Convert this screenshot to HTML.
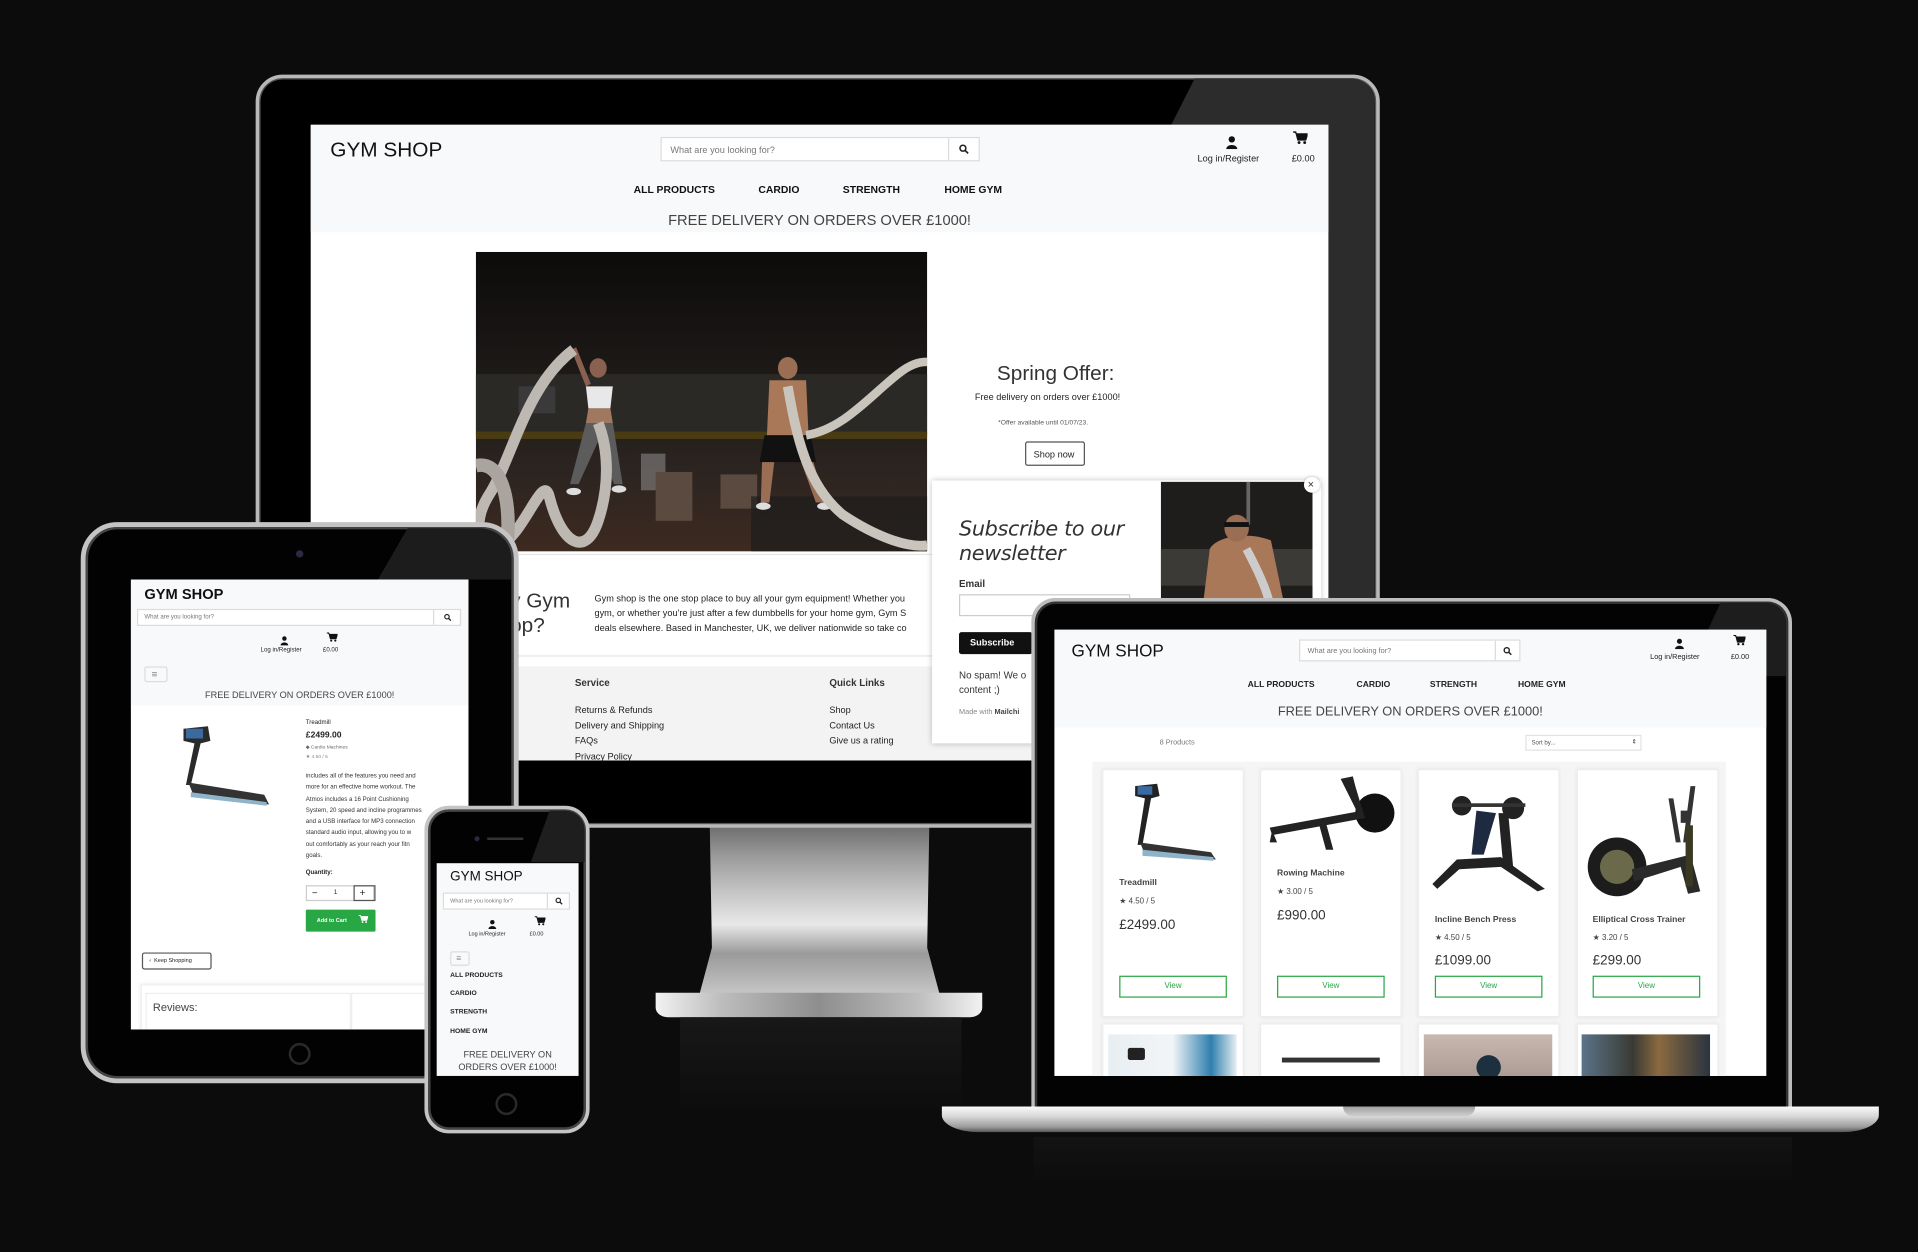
<!DOCTYPE html>
<html><head><meta charset="utf-8">
<style>
*{margin:0;padding:0;box-sizing:border-box}
html,body{width:1918px;height:1252px;overflow:hidden;background:#0b0b0b}
body{font-family:"Liberation Sans",sans-serif;color:#222}
#st{position:absolute;left:0;top:0;width:1568px;height:1024px;transform:scale(1.22321,1.22266);transform-origin:0 0;background:#0c0c0c}
.a{position:absolute}
.t{position:absolute;white-space:nowrap;line-height:1}
.b{font-weight:bold}
.scr{position:absolute;overflow:hidden;background:#fff}
.hdr{position:absolute;left:0;top:0;background:#f8f9fa}
.srch{position:absolute;background:#fff;border:1px solid #dcdcdc;color:#777}
.srch i{position:absolute;right:0;top:0;bottom:0;border-left:1px solid #dcdcdc;display:flex;align-items:center;justify-content:center}
.view{position:absolute;border:1px solid #28a745;color:#28a745;text-align:center;background:#fff}
.card{position:absolute;background:#fff;border:1px solid #ececec;box-shadow:0 0 3px rgba(0,0,0,.08)}
</style></head><body>
<div id="st">

<!-- ============ MONITOR ============ -->
<div class="a" style="left:570px;top:660px;width:200px;height:160px;background:linear-gradient(#505050 0%,#9a9a9a 25%,#c8c8c8 45%,#e8e8e8 60%,#9a9a9a 75%,#cfcfcf 100%);clip-path:polygon(5% 0,95% 0,94% 72%,100% 100%,0 100%,6% 72%)"></div>
<div class="a" style="left:536px;top:812px;width:267px;height:20px;border-radius:0 0 10px 10px / 0 0 8px 8px;background:linear-gradient(90deg,#f2f2f2,#bdbdbd 20%,#8e8e8e 50%,#bdbdbd 80%,#f2f2f2)"></div>
<div class="a" style="left:556px;top:832px;width:230px;height:80px;background:linear-gradient(#181818,#0c0c0c)"></div>
<div class="a" style="left:209px;top:61px;width:919px;height:616px;border-radius:22px 22px 4px 4px;background:#000;border:3px solid #b8b8b8;box-shadow:inset 0 0 0 1px #555"></div>
<div class="a" style="left:940px;top:64px;width:184px;height:430px;background:#2c2c2c;border-radius:0 20px 0 0;clip-path:polygon(20% 0,100% 0,100% 100%,0 100%,0 9.3%,9% 9.3%)"></div>
<div class="scr" style="left:254px;top:102px;width:832px;height:520px">
  <div class="hdr" style="width:832px;height:88px"></div>
  <div class="t" style="left:16px;top:12px;font-size:17px;color:#111">GYM SHOP</div>
  <div class="srch" style="left:286px;top:10px;width:261px;height:20px"><span class="t" style="left:7px;top:6px;font-size:7.5px">What are you looking for?</span><i style="width:25px"><svg width="8" height="8" viewBox="0 0 10 10"><circle cx="4" cy="4" r="3" fill="none" stroke="#222" stroke-width="1.6"/><path d="M6.3 6.3L9.3 9.3" stroke="#222" stroke-width="1.8"/></svg></i></div>
  <svg class="a" style="left:748px;top:9px" width="10" height="11" viewBox="0 0 10 11"><circle cx="5" cy="3" r="2.6" fill="#111"/><path d="M0.5 11 C0.5 6.5 9.5 6.5 9.5 11Z" fill="#111"/></svg>
  <div class="t" style="left:725px;top:24px;font-size:7.5px">Log in/Register</div>
  <svg class="a" style="left:803px;top:5px" width="12" height="11" viewBox="0 0 12 11"><path d="M0 1H2.3L4 7.5H10.5L12 2.5H3" fill="#111" stroke="#111" stroke-width="1"/><circle cx="5" cy="9.6" r="1.2" fill="#111"/><circle cx="9.6" cy="9.6" r="1.2" fill="#111"/></svg>
  <div class="t" style="left:802px;top:24px;font-size:7.5px">£0.00</div>
  <div class="t b" style="left:264px;top:49px;font-size:8.5px;color:#111">ALL PRODUCTS</div>
  <div class="t b" style="left:366px;top:49px;font-size:8.5px;color:#111">CARDIO</div>
  <div class="t b" style="left:435px;top:49px;font-size:8.5px;color:#111">STRENGTH</div>
  <div class="t b" style="left:518px;top:49px;font-size:8.5px;color:#111">HOME GYM</div>
  <div class="t" style="left:0;width:832px;text-align:center;top:72px;font-size:12px;color:#444">FREE DELIVERY ON ORDERS OVER £1000!</div>
  <svg class="a" style="left:135px;top:104px" width="369" height="245" viewBox="0 0 369 245">
    <defs><linearGradient id="fl" x1="0" y1="0" x2="0" y2="1"><stop offset="0" stop-color="#0d0b0a"/><stop offset=".45" stop-color="#1e1b19"/><stop offset=".7" stop-color="#2a2320"/><stop offset="1" stop-color="#3d2a20"/></linearGradient></defs>
    <rect width="369" height="245" fill="url(#fl)"/>
    <rect x="0" y="100" width="369" height="50" fill="#2b2926"/>
    <rect x="0" y="147" width="369" height="6" fill="#4a3c12"/>
    <rect x="35" y="110" width="30" height="22" fill="#3a3a3a"/>
    <rect x="135" y="165" width="20" height="30" fill="#9a9a9a" opacity=".5"/>
    <rect x="147" y="180" width="30" height="40" fill="#5a4a40"/>
    <rect x="200" y="182" width="30" height="28" fill="#5a4a40"/>
    <rect x="225" y="200" width="144" height="45" fill="#1c1c1c" opacity=".7"/>
    <ellipse cx="100" cy="95" rx="7" ry="8" fill="#8a6050"/>
    <path d="M90 110 L112 110 L110 128 L92 128Z" fill="#e8e8e8"/>
    <path d="M92 128 L110 128 L112 140 L90 140Z" fill="#a07860"/>
    <path d="M90 140 L112 140 L120 190 L113 190 L100 155 L84 190 L77 190Z" fill="#5c5c5c"/>
    <path d="M90 110 L78 80 L82 78 L94 108Z" fill="#8a6050"/>
    <ellipse cx="255" cy="95" rx="8" ry="9" fill="#9a6e55"/>
    <path d="M240 105 L270 105 L272 150 L238 150Z" fill="#a87858"/>
    <path d="M236 150 L274 150 L278 172 L232 172Z" fill="#111"/>
    <path d="M234 172 L244 172 L240 205 L233 205Z M266 172 L276 172 L286 205 L278 205Z" fill="#9a6e55"/>
    <ellipse cx="235" cy="208" rx="6" ry="3" fill="#ddd"/><ellipse cx="285" cy="208" rx="6" ry="3" fill="#ddd"/>
    <ellipse cx="80" cy="196" rx="6" ry="3" fill="#ddd"/><ellipse cx="117" cy="194" rx="6" ry="3" fill="#ddd"/>
    <path d="M80 80 C40 110 30 170 10 200 C-5 225 5 245 20 240 C40 230 55 180 60 200 C70 240 90 250 100 220 C110 190 108 160 100 140" fill="none" stroke="#bdb9b2" stroke-width="9"/>
    <path d="M0 175 C20 170 30 200 25 245" fill="none" stroke="#a9a59e" stroke-width="11"/>
    <path d="M255 110 C262 150 270 190 300 215 C330 235 355 242 369 240" fill="none" stroke="#c9c5bd" stroke-width="8"/>
    <path d="M270 150 C300 145 320 120 345 100 C355 92 362 90 369 90" fill="none" stroke="#c9c5bd" stroke-width="7"/>
  </svg>
  <div class="t" style="left:561px;top:195px;font-size:17px;color:#333">Spring Offer:</div>
  <div class="t" style="left:543px;top:219px;font-size:7.5px">Free delivery on orders over £1000!</div>
  <div class="t" style="left:562px;top:242px;font-size:5.5px;color:#555">*Offer available until 01/07/23.</div>
  <div class="a" style="left:584px;top:259px;width:49px;height:20px;border:1px solid #555;border-radius:2px"><span class="t" style="left:6px;top:6px;font-size:7.5px">Shop now</span></div>
  <div class="a" style="left:170px;top:351px;width:340px;height:1px;background:#e6e6e6"></div>
  <div class="t" style="left:163px;top:381px;font-size:17px;color:#333">y Gym</div>
  <div class="t" style="left:163px;top:401px;font-size:17px;color:#333">op?</div>
  <div class="t" style="left:232px;top:382px;font-size:7.5px;line-height:12px">Gym shop is the one stop place to buy all your gym equipment! Whether you<br>gym, or whether you're just after a few dumbbells for your home gym, Gym S<br>deals elsewhere. Based in Manchester, UK, we deliver nationwide so take co</div>
  <div class="a" style="left:165px;top:434px;width:680px;height:1px;background:#e6e6e6"></div>
  <div class="a" style="left:165px;top:443px;width:680px;height:80px;background:#f3f3f3"></div>
  <div class="t b" style="left:216px;top:453px;font-size:8px;color:#333">Service</div>
  <div class="t" style="left:216px;top:473px;font-size:7.5px;line-height:12.5px">Returns &amp; Refunds<br>Delivery and Shipping<br>FAQs<br>Privacy Policy</div>
  <div class="t b" style="left:424px;top:453px;font-size:8px;color:#333">Quick Links</div>
  <div class="t" style="left:424px;top:473px;font-size:7.5px;line-height:12.5px">Shop<br>Contact Us<br>Give us a rating</div>
  <div class="a" style="left:508px;top:291px;width:318px;height:215px;background:#fff;box-shadow:0 0 5px rgba(0,0,0,.25)"></div>
  <svg class="a" style="left:695px;top:292px" width="124" height="96" viewBox="0 0 124 96"><rect width="124" height="96" fill="#1f1d1c"/><rect y="55" width="124" height="30" fill="#3b3a36"/><rect x="70" y="0" width="3" height="35" fill="#666"/><path d="M40 55 C45 45 70 40 90 48 L100 96 L35 96Z" fill="#a87858"/><ellipse cx="62" cy="38" rx="10" ry="11" fill="#9a6e55"/><rect x="52" y="33" width="20" height="4" fill="#111"/><path d="M70 55 C78 70 85 85 88 96" stroke="#ccc" stroke-width="7" fill="none"/></svg>
  <div class="a" style="left:812px;top:288px;width:13px;height:13px;border-radius:50%;background:#fff;box-shadow:0 0 2px rgba(0,0,0,.3)"><span class="t" style="left:3px;top:2px;font-size:9px;color:#333">×</span></div>
  <div class="t" style="left:530px;top:321px;font-size:17px;line-height:20px;color:#333;font-family:'DejaVu Sans',sans-serif;font-style:italic;letter-spacing:-.3px">Subscribe to our<br>newsletter</div>
  <div class="t b" style="left:530px;top:372px;font-size:8px;color:#333">Email</div>
  <div class="a" style="left:530px;top:384px;width:140px;height:18px;border:1px solid #ccc"></div>
  <div class="a" style="left:530px;top:415px;width:60px;height:18px;background:#111;border-radius:2px"><span class="t b" style="left:9px;top:5px;font-size:7.5px;color:#fff">Subscribe</span></div>
  <div class="t" style="left:530px;top:445px;font-size:8px;line-height:12px;color:#333">No spam! We o<br>content ;)</div>
  <div class="t" style="left:530px;top:478px;font-size:6px;color:#888">Made with <b style="color:#444">Mailchi</b></div>
</div>

<!-- ============ TABLET ============ -->
<div class="a" style="left:66px;top:427px;width:358px;height:459px;border-radius:30px;background:#020202;border:4px solid #c4c4c4;box-shadow:inset 0 0 0 2px #444"></div>
<div class="a" style="left:200px;top:432px;width:218px;height:42px;background:linear-gradient(120deg,transparent 55%,#1c1c1c 55%);border-radius:0 26px 0 0"></div>
<div class="a" style="left:242px;top:450px;width:6px;height:6px;border-radius:50%;background:#2a2a44"></div>
<div class="a" style="left:236px;top:853px;width:18px;height:18px;border-radius:50%;border:2px solid #2a2a2a"></div>
<div class="scr" style="left:107px;top:474px;width:276px;height:368px">
  <div class="hdr" style="width:276px;height:103px"></div>
  <div class="t b" style="left:11px;top:6px;font-size:12px;color:#111">GYM SHOP</div>
  <div class="srch" style="left:5px;top:24px;width:265px;height:14px"><span class="t" style="left:5px;top:4px;font-size:5px">What are you looking for?</span><i style="width:22px"><svg width="6" height="6" viewBox="0 0 10 10"><circle cx="4" cy="4" r="3" fill="none" stroke="#222" stroke-width="1.6"/><path d="M6.3 6.3L9.3 9.3" stroke="#222" stroke-width="1.8"/></svg></i></div>
  <svg class="a" style="left:122px;top:46px" width="7" height="8" viewBox="0 0 10 11"><circle cx="5" cy="3" r="2.6" fill="#111"/><path d="M0.5 11 C0.5 6.5 9.5 6.5 9.5 11Z" fill="#111"/></svg>
  <div class="t" style="left:106px;top:56px;font-size:5px">Log in/Register</div>
  <svg class="a" style="left:160px;top:43px" width="9" height="8" viewBox="0 0 12 11"><path d="M0 1H2.3L4 7.5H10.5L12 2.5H3" fill="#111" stroke="#111"/><circle cx="5" cy="9.6" r="1.2" fill="#111"/><circle cx="9.6" cy="9.6" r="1.2" fill="#111"/></svg>
  <div class="t" style="left:157px;top:56px;font-size:5px">£0.00</div>
  <div class="a" style="left:11px;top:71px;width:19px;height:13px;border:1px solid #ddd;border-radius:2px"><span class="t" style="left:5px;top:2px;font-size:8px;color:#888">≡</span></div>
  <div class="t" style="left:0;width:276px;text-align:center;top:91px;font-size:7.5px;color:#444">FREE DELIVERY ON ORDERS OVER £1000!</div>
  <svg class="a" style="left:35px;top:118px" width="82" height="72" viewBox="0 0 82 72"><path d="M8 4 L28 2 L30 14 L22 16 L14 50 L10 50 L17 16 L8 14Z" fill="#2a2a2a"/><rect x="10" y="4" width="14" height="8" fill="#3a6aa0"/><path d="M12 48 L74 58 L78 66 L16 58Z" fill="#333"/><path d="M14 56 L76 64 L76 67 L14 60Z" fill="#8fb4c9"/></svg>
  <div class="t" style="left:143px;top:115px;font-size:5px">Treadmill</div>
  <div class="t b" style="left:143px;top:124px;font-size:7px">£2499.00</div>
  <div class="t" style="left:143px;top:135px;font-size:4px;color:#666">&#9670; Cardio Machines</div>
  <div class="t" style="left:143px;top:143px;font-size:4px;color:#888">&#9733; 4.50 / 5</div>
  <div class="t" style="left:143px;top:157px;font-size:5px;line-height:9.3px;color:#333">includes all of the features you need and<br>more for an effective home workout. The<br>Atmos includes a 16 Point Cushioning<br>System, 20 speed and incline programmes<br>and a USB interface for MP3 connection<br>standard audio input, allowing you to w<br>out comfortably as your reach your fitn<br>goals.</div>
  <div class="t b" style="left:143px;top:238px;font-size:5px">Quantity:</div>
  <div class="a" style="left:143px;top:250px;width:56px;height:13px;border:1px solid #ccc"><span class="t" style="left:4px;top:2px;font-size:8px">−</span><span class="t" style="left:22px;top:3px;font-size:5px">1</span><span class="a" style="left:38px;top:-1px;width:18px;height:13px;border:1px solid #555"></span><span class="t" style="left:43px;top:2px;font-size:8px">+</span></div>
  <div class="a" style="left:143px;top:270px;width:57px;height:18px;background:#28a745;border-radius:1px"><span class="t b" style="left:9px;top:7px;font-size:4.5px;color:#fff">Add to Cart</span><svg class="a" style="left:43px;top:4px" width="8" height="7" viewBox="0 0 12 11"><path d="M0 1H2.3L4 7.5H10.5L12 2.5H3" fill="#fff" stroke="#fff"/><circle cx="5" cy="9.6" r="1.2" fill="#fff"/><circle cx="9.6" cy="9.6" r="1.2" fill="#fff"/></svg></div>
  <div class="a" style="left:9px;top:305px;width:57px;height:14px;border:1px solid #555;border-radius:2px"><span class="t" style="left:5px;top:4px;font-size:4.5px">‹&nbsp; Keep Shopping</span></div>
  <div class="a" style="left:8px;top:331px;width:268px;height:40px;border:1px solid #eee;box-shadow:0 0 3px rgba(0,0,0,.1)"></div>
  <div class="a" style="left:12px;top:338px;width:168px;height:40px;border:1px solid #eee"></div>
  <div class="a" style="left:180px;top:338px;width:96px;height:40px;border:1px solid #eee"></div>
  <div class="t" style="left:18px;top:346px;font-size:9px;color:#444">Reviews:</div>
</div>

<!-- ============ PHONE ============ -->
<div class="a" style="left:347px;top:659px;width:135px;height:268px;border-radius:20px;background:#020202;border:3px solid #c4c4c4;box-shadow:inset 0 0 0 2px #444"></div>
<div class="a" style="left:420px;top:663px;width:58px;height:42px;background:linear-gradient(110deg,transparent 40%,#1e1e1e 40%);border-radius:0 16px 0 0"></div>
<div class="a" style="left:388px;top:684px;width:4px;height:4px;border-radius:50%;background:#2a2a44"></div>
<div class="a" style="left:398px;top:685px;width:30px;height:2px;border-radius:1px;background:#333"></div>
<div class="a" style="left:405px;top:894px;width:18px;height:18px;border-radius:50%;border:2px solid #2a2a2a"></div>
<div class="scr" style="left:357px;top:706px;width:116px;height:174px;background:#f8f9fa">
  <div class="t" style="left:11px;top:6px;font-size:11px;color:#111">GYM SHOP</div>
  <div class="srch" style="left:5px;top:24px;width:104px;height:14px"><span class="t" style="left:5px;top:4px;font-size:4.5px">What are you looking for?</span><i style="width:18px"><svg width="6" height="6" viewBox="0 0 10 10"><circle cx="4" cy="4" r="3" fill="none" stroke="#222" stroke-width="1.6"/><path d="M6.3 6.3L9.3 9.3" stroke="#222" stroke-width="1.8"/></svg></i></div>
  <svg class="a" style="left:42px;top:46px" width="7" height="8" viewBox="0 0 10 11"><circle cx="5" cy="3" r="2.6" fill="#111"/><path d="M0.5 11 C0.5 6.5 9.5 6.5 9.5 11Z" fill="#111"/></svg>
  <div class="t" style="left:26px;top:56px;font-size:4.5px">Log in/Register</div>
  <svg class="a" style="left:80px;top:43px" width="9" height="8" viewBox="0 0 12 11"><path d="M0 1H2.3L4 7.5H10.5L12 2.5H3" fill="#111" stroke="#111"/><circle cx="5" cy="9.6" r="1.2" fill="#111"/><circle cx="9.6" cy="9.6" r="1.2" fill="#111"/></svg>
  <div class="t" style="left:76px;top:56px;font-size:4.5px">£0.00</div>
  <div class="a" style="left:11px;top:72px;width:16px;height:12px;border:1px solid #ddd;border-radius:2px"><span class="t" style="left:4px;top:2px;font-size:7px;color:#888">≡</span></div>
  <div class="t b" style="left:11px;top:90px;font-size:5.5px">ALL PRODUCTS</div>
  <div class="t b" style="left:11px;top:105px;font-size:5.5px">CARDIO</div>
  <div class="t b" style="left:11px;top:120px;font-size:5.5px">STRENGTH</div>
  <div class="t b" style="left:11px;top:136px;font-size:5.5px">HOME GYM</div>
  <div class="t" style="left:0;width:116px;text-align:center;top:152px;font-size:7.5px;line-height:10px;color:#444">FREE DELIVERY ON<br>ORDERS OVER £1000!</div>
</div>

<!-- ============ LAPTOP ============ -->
<div class="a" style="left:843px;top:489px;width:622px;height:420px;border-radius:20px 20px 0 0;background:#030303;border:3px solid #bdbdbd;border-bottom:none;box-shadow:inset 0 0 0 2px #333"></div>
<div class="a" style="left:1340px;top:493px;width:120px;height:60px;background:linear-gradient(115deg,transparent 45%,#1d1d1d 45%);border-radius:0 16px 0 0"></div>
<div class="a" style="left:770px;top:905px;width:766px;height:21px;border-radius:0 0 30px 30px / 0 0 14px 14px;background:linear-gradient(#fafafa 0%,#d6d6d6 40%,#9a9a9a 80%,#555 100%)"></div>
<div class="a" style="left:1098px;top:905px;width:108px;height:8px;border-radius:0 0 8px 8px;background:linear-gradient(#a0a0a0,#cfcfcf)"></div>
<div class="a" style="left:845px;top:930px;width:620px;height:40px;background:linear-gradient(#131313,transparent)"></div>
<div class="scr" style="left:862px;top:515px;width:582px;height:365px">
  <div class="hdr" style="width:582px;height:80px"></div>
  <div class="t" style="left:14px;top:10px;font-size:14px;color:#111">GYM SHOP</div>
  <div class="srch" style="left:200px;top:8px;width:181px;height:18px"><span class="t" style="left:6px;top:6px;font-size:6px">What are you looking for?</span><i style="width:20px"><svg width="7" height="7" viewBox="0 0 10 10"><circle cx="4" cy="4" r="3" fill="none" stroke="#222" stroke-width="1.6"/><path d="M6.3 6.3L9.3 9.3" stroke="#222" stroke-width="1.8"/></svg></i></div>
  <svg class="a" style="left:507px;top:7px" width="8" height="9" viewBox="0 0 10 11"><circle cx="5" cy="3" r="2.6" fill="#111"/><path d="M0.5 11 C0.5 6.5 9.5 6.5 9.5 11Z" fill="#111"/></svg>
  <div class="t" style="left:487px;top:20px;font-size:6px">Log in/Register</div>
  <svg class="a" style="left:555px;top:4px" width="10" height="9" viewBox="0 0 12 11"><path d="M0 1H2.3L4 7.5H10.5L12 2.5H3" fill="#111" stroke="#111"/><circle cx="5" cy="9.6" r="1.2" fill="#111"/><circle cx="9.6" cy="9.6" r="1.2" fill="#111"/></svg>
  <div class="t" style="left:553px;top:20px;font-size:6px">£0.00</div>
  <div class="t b" style="left:158px;top:42px;font-size:7px">ALL PRODUCTS</div>
  <div class="t b" style="left:247px;top:42px;font-size:7px">CARDIO</div>
  <div class="t b" style="left:307px;top:42px;font-size:7px">STRENGTH</div>
  <div class="t b" style="left:379px;top:42px;font-size:7px">HOME GYM</div>
  <div class="t" style="left:0;width:582px;text-align:center;top:62px;font-size:10.5px;color:#444">FREE DELIVERY ON ORDERS OVER £1000!</div>
  <div class="t" style="left:86px;top:90px;font-size:6px;color:#777">8 Products</div>
  <div class="a" style="left:385px;top:86px;width:95px;height:13px;border:1px solid #e2e2e2"><span class="t" style="left:4px;top:4px;font-size:5px;color:#555">Sort by...</span><span class="t" style="left:86px;top:3px;font-size:5px">&#8661;</span></div>
  <div class="a" style="left:31px;top:108px;width:518px;height:270px;background:#f5f5f5"></div>
  <div class="card" style="left:39px;top:114px;width:116px;height:203px"></div>
  <div class="card" style="left:168px;top:114px;width:116px;height:203px"></div>
  <div class="card" style="left:297px;top:114px;width:116px;height:203px"></div>
  <div class="card" style="left:427px;top:114px;width:116px;height:203px"></div>
  <svg class="a" style="left:58px;top:124px" width="80" height="66" viewBox="0 0 80 66"><path d="M8 4 L26 2 L28 12 L21 14 L14 52 L10 52 L16 14 L8 12Z" fill="#222"/><rect x="10" y="4" width="12" height="7" fill="#3a6aa0"/><path d="M12 50 L70 58 L74 64 L16 60Z" fill="#333"/><path d="M14 56 L72 62 L72 65 L14 61Z" fill="#8fb4c9"/></svg>
  <svg class="a" style="left:172px;top:118px" width="108" height="70" viewBox="0 0 108 70"><circle cx="90" cy="32" r="16" fill="#111"/><path d="M62 4 L72 2 L74 10 L80 30 L76 32 Z" fill="#222"/><path d="M4 44 L80 30 L82 36 L6 50Z" fill="#222"/><path d="M44 40 L50 62 L56 62 L50 40Z M6 46 L4 56 L10 56Z" fill="#222"/></svg>
  <svg class="a" style="left:305px;top:128px" width="104" height="88" viewBox="0 0 104 88"><circle cx="28" cy="16" r="8" fill="#222"/><circle cx="70" cy="18" r="9" fill="#222"/><rect x="20" y="14" width="60" height="3" fill="#333"/><path d="M40 20 L56 22 L46 56 L36 56Z" fill="#1e2a40"/><path d="M24 60 L60 58 L96 84 L90 86 L60 66 L26 68 L8 84 L4 80Z" fill="#222"/><path d="M58 22 L66 22 L70 66 L62 66Z" fill="#222"/></svg>
  <svg class="a" style="left:432px;top:124px" width="106" height="100" viewBox="0 0 106 100"><path d="M88 4 L92 4 L86 50 L82 50Z M70 14 L74 14 L80 50 L76 50Z" fill="#333"/><rect x="80" y="24" width="8" height="10" fill="#333"/><circle cx="28" cy="70" r="24" fill="#1c1c1c"/><circle cx="28" cy="70" r="14" fill="#6a6a4a"/><path d="M40 72 L88 60 L96 90 L86 92 L80 70 L42 82Z" fill="#2a2a2a"/><rect x="84" y="36" width="6" height="50" fill="#3a3a20"/></svg>
  <div class="t b" style="left:53px;top:204px;font-size:7px;color:#444">Treadmill</div>
  <div class="t" style="left:53px;top:220px;font-size:6.5px;color:#444">&#9733; 4.50 / 5</div>
  <div class="t" style="left:53px;top:237px;font-size:11px;color:#333">£2499.00</div>
  <div class="t b" style="left:182px;top:196px;font-size:7px;color:#444">Rowing Machine</div>
  <div class="t" style="left:182px;top:212px;font-size:6.5px;color:#444">&#9733; 3.00 / 5</div>
  <div class="t" style="left:182px;top:229px;font-size:11px;color:#333">£990.00</div>
  <div class="t b" style="left:311px;top:234px;font-size:7px;color:#444">Incline Bench Press</div>
  <div class="t" style="left:311px;top:250px;font-size:6.5px;color:#444">&#9733; 4.50 / 5</div>
  <div class="t" style="left:311px;top:266px;font-size:11px;color:#333">£1099.00</div>
  <div class="t b" style="left:440px;top:234px;font-size:7px;color:#444">Elliptical Cross Trainer</div>
  <div class="t" style="left:440px;top:250px;font-size:6.5px;color:#444">&#9733; 3.20 / 5</div>
  <div class="t" style="left:440px;top:266px;font-size:11px;color:#333">£299.00</div>
  <div class="view" style="left:53px;top:283px;width:88px;height:18px"><span class="t" style="left:0;width:86px;top:5px;font-size:6.5px">View</span></div>
  <div class="view" style="left:182px;top:283px;width:88px;height:18px"><span class="t" style="left:0;width:86px;top:5px;font-size:6.5px">View</span></div>
  <div class="view" style="left:311px;top:283px;width:88px;height:18px"><span class="t" style="left:0;width:86px;top:5px;font-size:6.5px">View</span></div>
  <div class="view" style="left:440px;top:283px;width:88px;height:18px"><span class="t" style="left:0;width:86px;top:5px;font-size:6.5px">View</span></div>
  <div class="card" style="left:39px;top:322px;width:116px;height:60px"></div>
  <div class="card" style="left:168px;top:322px;width:116px;height:60px"></div>
  <div class="card" style="left:297px;top:322px;width:116px;height:60px"></div>
  <div class="card" style="left:427px;top:322px;width:116px;height:60px"></div>
  <div class="a" style="left:44px;top:331px;width:105px;height:40px;background:linear-gradient(90deg,#e8eef2,#f2f5f7 50%,#2f7fae 80%,#e8eef2)"></div>
  <div class="a" style="left:60px;top:342px;width:14px;height:10px;background:#222;border-radius:2px"></div>
  <div class="a" style="left:173px;top:331px;width:105px;height:40px;background:#fff"></div>
  <div class="a" style="left:186px;top:350px;width:80px;height:4px;background:#333"></div>
  <div class="a" style="left:302px;top:331px;width:105px;height:40px;background:linear-gradient(#c8b8b0,#a89890)"></div>
  <div class="a" style="left:345px;top:348px;width:20px;height:20px;border-radius:50%;background:#1c3040"></div>
  <div class="a" style="left:431px;top:331px;width:105px;height:40px;background:linear-gradient(90deg,#5a7488,#3a3a34 40%,#8a6a40 60%,#2a3440)"></div>
</div>

</div>
</body></html>
